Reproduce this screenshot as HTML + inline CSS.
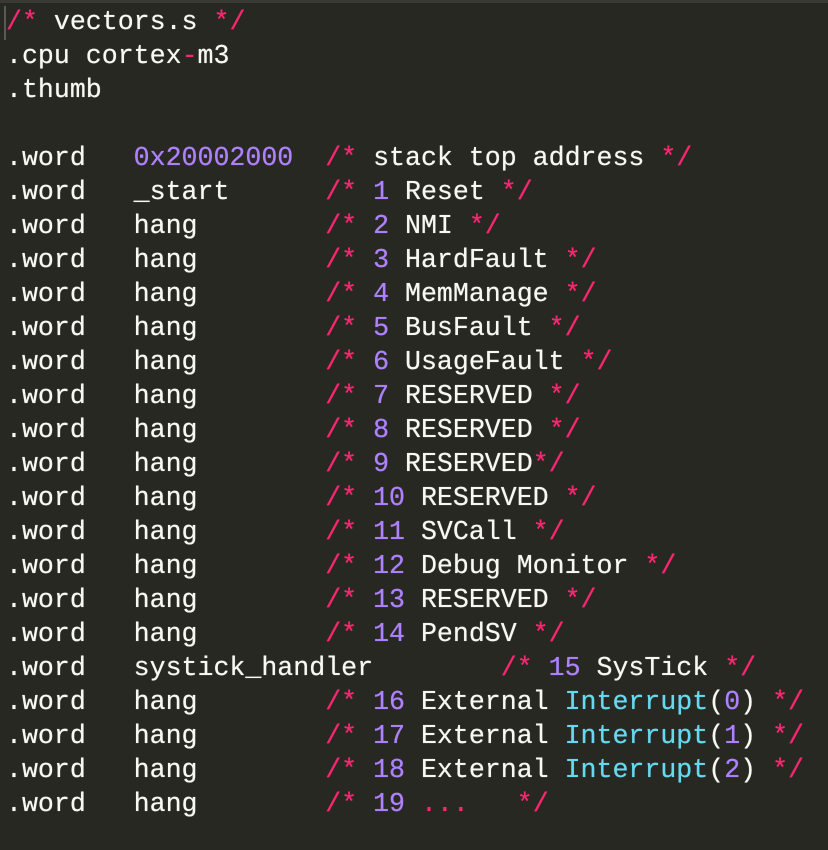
<!DOCTYPE html>
<html><head><style>
html,body{margin:0;padding:0;background:#272822;width:828px;height:850px;overflow:hidden}
.top{position:absolute;left:0;top:0;width:828px;height:3px;background:#3a3a35}
.cur{position:absolute;left:4px;top:6px;width:2px;height:34px;background:#5a5a55}
pre{position:absolute;left:6px;top:5px;margin:0;font-family:"Liberation Mono",monospace;font-size:26.6px;line-height:34px;color:#f8f8f2;text-shadow:0 0 0.6px currentColor}
.c{color:#f92672}.n{color:#ae81ff}.f{color:#66d9ef}
</style></head><body><div class="top"></div><div class="cur"></div>
<pre><span class="c">/*</span> vectors.s <span class="c">*/</span>
.cpu cortex<span class="c">-</span>m3
.thumb

.word   <span class="n">0x20002000</span>  <span class="c">/*</span> stack top address <span class="c">*/</span>
.word   _start      <span class="c">/*</span> <span class="n">1</span> Reset <span class="c">*/</span>
.word   hang        <span class="c">/*</span> <span class="n">2</span> NMI <span class="c">*/</span>
.word   hang        <span class="c">/*</span> <span class="n">3</span> HardFault <span class="c">*/</span>
.word   hang        <span class="c">/*</span> <span class="n">4</span> MemManage <span class="c">*/</span>
.word   hang        <span class="c">/*</span> <span class="n">5</span> BusFault <span class="c">*/</span>
.word   hang        <span class="c">/*</span> <span class="n">6</span> UsageFault <span class="c">*/</span>
.word   hang        <span class="c">/*</span> <span class="n">7</span> RESERVED <span class="c">*/</span>
.word   hang        <span class="c">/*</span> <span class="n">8</span> RESERVED <span class="c">*/</span>
.word   hang        <span class="c">/*</span> <span class="n">9</span> RESERVED<span class="c">*/</span>
.word   hang        <span class="c">/*</span> <span class="n">10</span> RESERVED <span class="c">*/</span>
.word   hang        <span class="c">/*</span> <span class="n">11</span> SVCall <span class="c">*/</span>
.word   hang        <span class="c">/*</span> <span class="n">12</span> Debug Monitor <span class="c">*/</span>
.word   hang        <span class="c">/*</span> <span class="n">13</span> RESERVED <span class="c">*/</span>
.word   hang        <span class="c">/*</span> <span class="n">14</span> PendSV <span class="c">*/</span>
.word   systick_handler        <span class="c">/*</span> <span class="n">15</span> SysTick <span class="c">*/</span>
.word   hang        <span class="c">/*</span> <span class="n">16</span> External <span class="f">Interrupt</span>(<span class="n">0</span>) <span class="c">*/</span>
.word   hang        <span class="c">/*</span> <span class="n">17</span> External <span class="f">Interrupt</span>(<span class="n">1</span>) <span class="c">*/</span>
.word   hang        <span class="c">/*</span> <span class="n">18</span> External <span class="f">Interrupt</span>(<span class="n">2</span>) <span class="c">*/</span>
.word   hang        <span class="c">/*</span> <span class="n">19</span> <span class="c">...</span>   <span class="c">*/</span></pre>
</body></html>
